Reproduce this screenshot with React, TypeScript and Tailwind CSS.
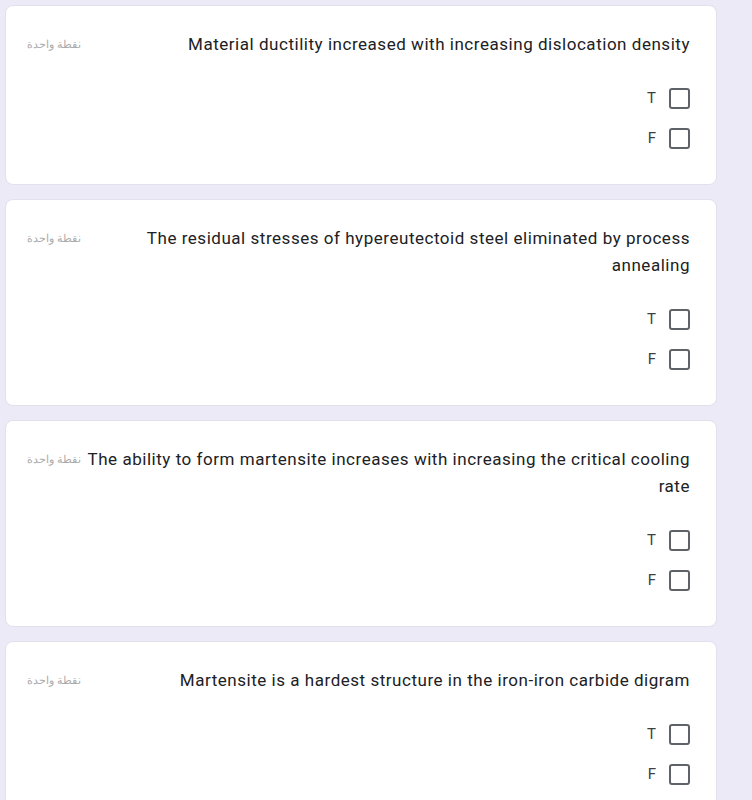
const questions = [
  "Material ductility increased with increasing dislocation density",
  "The residual stresses of hypereutectoid steel eliminated by process annealing",
  "The ability to form martensite increases with increasing the critical cooling rate",
  "Martensite is a hardest structure in the iron-iron carbide digram",
];

function Option({ label }: { label: string }) {
  return (
    <div className="flex h-10 items-center gap-[13px]">
      <span className="h-[21px] w-[21px] rounded-[3px] border-2 border-[#5f6368]" />
      <span className="text-[15px] text-[#3c4043]">{label}</span>
    </div>
  );
}

export default function App() {
  return (
    <div
      className="min-h-screen bg-[#edeaf7] pb-4 pl-[5px] pr-[35px] pt-[5px]"
      style={{ fontFamily: "Roboto, 'Noto Sans', sans-serif" }}
    >
      <div className="flex flex-col gap-[14px]">
        {questions.map((q) => (
          <div
            key={q}
            dir="rtl"
            className="rounded-lg border border-[#e2e0ea] bg-white pb-[26px] pl-[21px] pr-[26px] pt-[25px]"
          >
            <div className="flex items-start gap-[5px]">
              <div className="flex-1 text-[17px] leading-[27px] tracking-[0.53px] text-[#202124]">
                {q}
              </div>
              <span className="mt-[6px] shrink-0 text-[10.5px] leading-[15px] text-[#ababab]">
                نقطة واحدة
              </span>
            </div>
            <div className="mt-5 flex flex-col">
              <Option label="T" />
              <Option label="F" />
            </div>
          </div>
        ))}
      </div>
    </div>
  );
}
